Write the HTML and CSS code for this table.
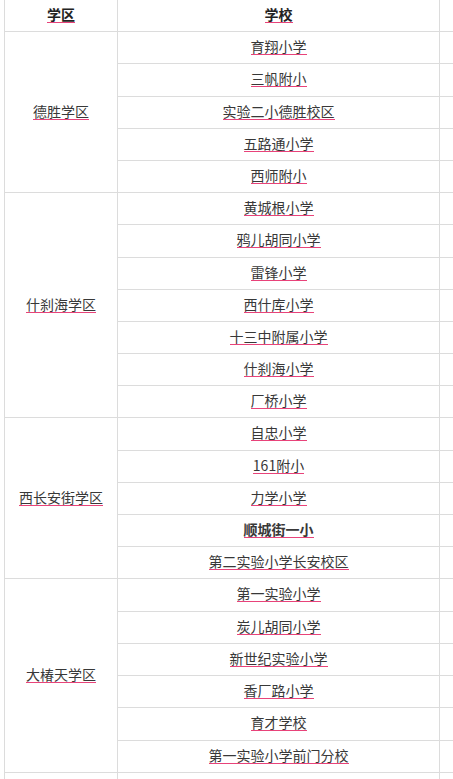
FILE: index.html
```html
<!DOCTYPE html>
<html lang="zh">
<head>
<meta charset="utf-8">
<link rel="stylesheet" href="styles.css">
</head>
<body>
<div class="wrap">
<table class="schools">
  <colgroup><col class="c1"><col class="c2"><col class="c3"></colgroup>
  <thead>
    <tr><th><span class="u">学区</span></th><th><span class="u">学校</span></th><th></th></tr>
  </thead>
  <tbody>
    <tr><td rowspan="5"><span class="u">德胜学区</span></td><td><span class="u">育翔小学</span></td><td></td></tr>
    <tr class="tall"><td><span class="u">三帆附小</span></td><td></td></tr>
    <tr><td><span class="u">实验二小德胜校区</span></td><td></td></tr>
    <tr><td><span class="u">五路通小学</span></td><td></td></tr>
    <tr><td><span class="u">西师附小</span></td><td></td></tr>

    <tr><td rowspan="7"><span class="u">什刹海学区</span></td><td><span class="u">黄城根小学</span></td><td></td></tr>
    <tr class="tall"><td><span class="u">鸦儿胡同小学</span></td><td></td></tr>
    <tr><td><span class="u">雷锋小学</span></td><td></td></tr>
    <tr><td><span class="u">西什库小学</span></td><td></td></tr>
    <tr><td><span class="u">十三中附属小学</span></td><td></td></tr>
    <tr><td><span class="u">什刹海小学</span></td><td></td></tr>
    <tr><td><span class="u">厂桥小学</span></td><td></td></tr>

    <tr class="tall"><td rowspan="5"><span class="u">西长安街学区</span></td><td><span class="u">自忠小学</span></td><td></td></tr>
    <tr><td><span class="u">161附小</span></td><td></td></tr>
    <tr><td><span class="u">力学小学</span></td><td></td></tr>
    <tr><td><span class="u b">顺城街一小</span></td><td></td></tr>
    <tr><td><span class="u">第二实验小学长安校区</span></td><td></td></tr>

    <tr class="tall"><td rowspan="6"><span class="u">大椿天学区</span></td><td><span class="u">第一实验小学</span></td><td></td></tr>
    <tr><td><span class="u">炭儿胡同小学</span></td><td></td></tr>
    <tr><td><span class="u">新世纪实验小学</span></td><td></td></tr>
    <tr><td><span class="u">香厂路小学</span></td><td></td></tr>
    <tr class="tall"><td><span class="u">育才学校</span></td><td></td></tr>
    <tr><td><span class="u">第一实验小学前门分校</span></td><td></td></tr>

    <tr><td></td><td></td><td></td></tr>
  </tbody>
</table>
</div>
</body>
</html>
```

FILE: styles.css
```css
html, body {
  margin: 0;
  padding: 0;
  overflow: hidden;
  background: #fff;
}
.wrap {
  width: 453px;
  height: 779px;
  overflow: hidden;
  padding-left: 4px;
  box-sizing: border-box;
}
.schools {
  border-collapse: collapse;
  table-layout: fixed;
  width: 600px;
  margin-top: -1px;
  font-family: "Microsoft YaHei", "Noto Sans CJK SC", sans-serif;
  font-size: 14px;
  color: #383838;
}
.c1 { width: 113px; }
.c2 { width: 322px; }
.c3 { width: 165px; }
.schools th,
.schools td {
  border: 1px solid #dcdcdc;
  padding: 4px 4px 6px;
  line-height: 21px;
  text-align: center;
  vertical-align: middle;
  font-weight: normal;
}
.schools .tall td {
  padding-bottom: 7px;
}
.schools .tall td[rowspan] {
  padding-bottom: 6px;
}
.schools th {
  font-weight: bold;
  color: #222;
}
.u {
  display: inline-block;
  line-height: 16px;
  border-bottom: 1px solid #e8437a;
}
.b { font-weight: bold; }
```
